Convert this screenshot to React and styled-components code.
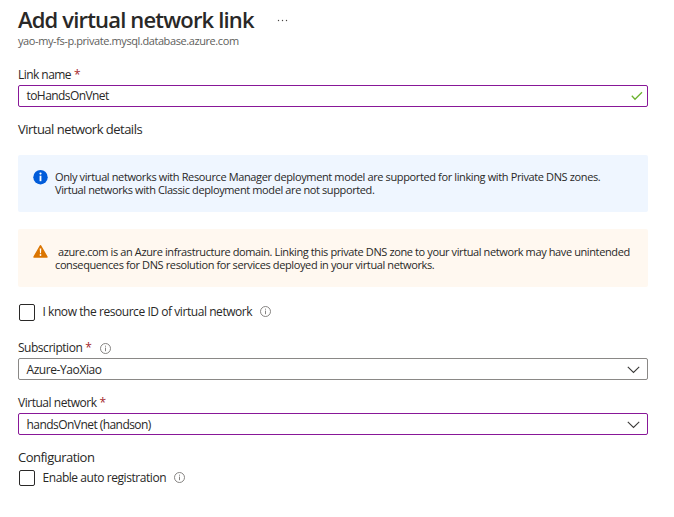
import React from "react";
import styled, { createGlobalStyle } from "styled-components";

const Global = createGlobalStyle`
  * { box-sizing: border-box; }
  body {
    margin: 0;
    background: #fff;
    color: #292827;
    font-family: "Open Sans", "Noto Sans", sans-serif;
    font-size: 12px;
    line-height: 16px;
  }
`;

const Page = styled.main`
  width: 674px;
  height: 517px;
  padding: 5px 26px 0 18px;
  display: flex;
  flex-direction: column;
  overflow: hidden;
`;

const TitleRow = styled.header`
  display: flex;
  align-items: center;
  gap: 23px;
  height: 28px;
  svg { margin-top: 2px; }
`;

const Title = styled.h1`
  margin: 0;
  font-size: 22px;
  line-height: 28px;
  font-weight: 600;
  white-space: nowrap;
`;

const Text = styled.span`
  white-space: nowrap;
  letter-spacing: ${(p) => p.$track || 0}px;
`;

const Subtitle = styled.div`
  height: 16px;
  font-size: 11px;
  color: #605e5c;
`;

const Field = styled.section`
  display: flex;
  flex-direction: column;
  margin-top: ${(p) => p.$top}px;
`;

const Label = styled.div`
  display: flex;
  align-items: center;
  height: 16px;
  margin-bottom: 2px;
`;

const Star = styled.span`
  color: #a4262c;
  margin: 0 9px 0 3px;
  width: 6px;
`;

const Control = styled.div`
  display: flex;
  align-items: center;
  justify-content: space-between;
  height: 22px;
  padding: ${(p) => (p.$select ? "2px 7px 0 7.5px" : "0 4px 0 7.5px")};
  border: 1px solid ${(p) => (p.$changed ? "#881798" : "#8a8886")};
  border-radius: 2px;
`;

const Heading = styled.h2`
  margin: ${(p) => p.$top}px 0 0;
  height: 18px;
  font-size: 13px;
  line-height: 18px;
  font-weight: 400;
`;

const Banner = styled.aside`
  display: flex;
  gap: 7px;
  margin-top: ${(p) => p.$top}px;
  height: ${(p) => p.$height}px;
  padding: 15px 15px 0;
  border-radius: 2px;
  background: ${(p) => p.$tone};
  font-size: 11px;
  line-height: 13px;
  svg { flex: none; }
`;

const Lines = styled.div`
  display: flex;
  flex-direction: column;
  padding-top: ${(p) => p.$top}px;
`;

const BannerLine = styled(Text)`
  height: 13px;
  padding-left: ${(p) => p.$indent || 0}px;
`;

const CheckRow = styled.div`
  display: flex;
  align-items: flex-start;
  height: 17px;
  margin-top: ${(p) => p.$top}px;
  padding-left: 1px;
`;

const Box = styled.span`
  width: 16px;
  height: ${(p) => p.$height}px;
  margin-right: 7.5px;
  border: 1px solid #292827;
  border-radius: 2px;
`;

const Hint = styled.svg`
  display: block;
  margin-left: ${(p) => p.$gap || 0}px;
  margin-top: ${(p) => (p.$gap ? 2 : 0)}px;
`;

const InfoHint = ({ gap }) => (
  <Hint $gap={gap} width="11" height="11" viewBox="0 0 11 11" fill="none">
    <circle cx="5.5" cy="5.5" r="5" stroke="#797775" strokeWidth="0.9" />
    <path d="M5.5 4.6V8.2M5.5 2.7v1" stroke="#797775" strokeWidth="0.9" />
  </Hint>
);

const Chevron = () => (
  <svg width="13" height="8" viewBox="0 0 13 8" fill="none">
    <path d="M.8 .8 6.5 6.5 12.2 .8" stroke="#3b3a39" strokeWidth="1.1" />
  </svg>
);

const Valid = () => (
  <svg width="12" height="10" viewBox="0 0 12 10" fill="none">
    <path d="M.8 4.8 4 8.2 11 1.2" stroke="#6bb22e" strokeWidth="1.3" />
  </svg>
);

const InfoBadge = () => (
  <svg width="15" height="15" viewBox="0 0 15 15">
    <circle cx="7.5" cy="7.2" r="7.2" fill="#015cda" />
    <circle cx="7.5" cy="3.6" r="1.1" fill="#fff" />
    <path d="M6.6 5.7h1.8v5.5H6.6z" fill="#fff" />
  </svg>
);

const WarningBadge = () => (
  <svg width="15" height="15" viewBox="0 0 15 15">
    <path d="M7.5 1.7 14.1 13H.9z" fill="#db7500" stroke="#db7500" strokeWidth="1.3" strokeLinejoin="round" />
    <path d="M6.7 4.6h1.6L8 9.2H7z" fill="#fff" />
    <circle cx="7.5" cy="11" r=".9" fill="#fff" />
  </svg>
);

const More = () => (
  <svg width="11" height="3" viewBox="0 0 11 3" fill="#484644">
    <circle cx="1.5" cy="1.5" r=".7" />
    <circle cx="5.5" cy="1.5" r=".7" />
    <circle cx="9.5" cy="1.5" r=".7" />
  </svg>
);

export default function App() {
  return (
    <>
      <Global />
      <Page>
        <TitleRow>
          <Title><Text $track={-0.83}>Add virtual network link</Text></Title>
          <More />
        </TitleRow>
        <Subtitle><Text $track={-0.41}>yao-my-fs-p.private.mysql.database.azure.com</Text></Subtitle>

        <Field $top={18}>
          <Label><Text $track={-0.55}>Link name</Text><Star>*</Star></Label>
          <Control $changed><Text $track={-0.57}>toHandsOnVnet</Text><Valid /></Control>
        </Field>

        <Heading $top={13}><Text $track={-0.52}>Virtual network details</Text></Heading>

        <Banner $top={17} $height={57} $tone="#eff6ff">
          <InfoBadge />
          <Lines $top={0}>
            <BannerLine $track={-0.375}>Only virtual networks with Resource Manager deployment model are supported for linking with Private DNS zones.</BannerLine>
            <BannerLine $track={-0.385}>Virtual networks with Classic deployment model are not supported.</BannerLine>
          </Lines>
        </Banner>

        <Banner $top={17} $height={58} $tone="#fff8f0">
          <WarningBadge />
          <Lines $top={1}>
            <BannerLine $indent={3} $track={-0.39}>azure.com is an Azure infrastructure domain. Linking this private DNS zone to your virtual network may have unintended</BannerLine>
            <BannerLine $track={-0.385}>consequences for DNS resolution for services deployed in your virtual networks.</BannerLine>
          </Lines>
        </Banner>

        <CheckRow $top={17}>
          <Box $height={17} />
          <Text $track={-0.44}>I know the resource ID of virtual network</Text>
          <InfoHint gap={7.5} />
        </CheckRow>

        <Field $top={19}>
          <Label><Text $track={-0.47}>Subscription</Text><Star>*</Star><InfoHint /></Label>
          <Control $select><Text $track={-0.42}>Azure-YaoXiao</Text><Chevron /></Control>
        </Field>

        <Field $top={15}>
          <Label><Text $track={-0.47}>Virtual network</Text><Star>*</Star></Label>
          <Control $select $changed><Text $track={-0.55}>handsOnVnet (handson)</Text><Chevron /></Control>
        </Field>

        <Heading $top={13}><Text $track={-0.5}>Configuration</Text></Heading>
        <CheckRow $top={4}>
          <Box $height={16} />
          <Text $track={-0.44}>Enable auto registration</Text>
          <InfoHint gap={7.5} />
        </CheckRow>
      </Page>
    </>
  );
}
